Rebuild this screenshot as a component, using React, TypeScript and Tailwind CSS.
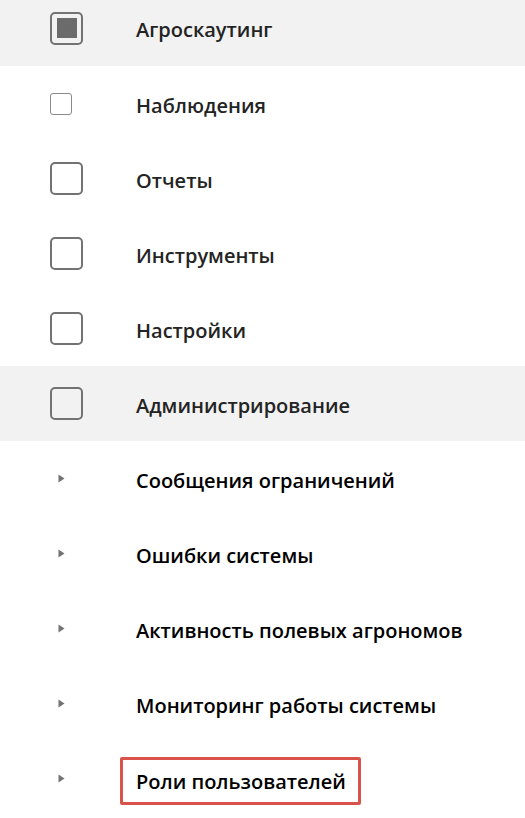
const topItems = [
    { label: 'Агроскаутинг', box: 'filled', shaded: true },
    { label: 'Наблюдения', box: 'small', shaded: false },
    { label: 'Отчеты', box: 'empty', shaded: false },
    { label: 'Инструменты', box: 'empty', shaded: false },
    { label: 'Настройки', box: 'empty', shaded: false },
    { label: 'Администрирование', box: 'empty', shaded: true },
];

const subItems = [
    'Сообщения ограничений',
    'Ошибки системы',
    'Активность полевых агрономов',
    'Мониторинг работы системы',
];

const Box = ({ kind }: { kind: string }) => {
    if (kind === 'small') {
        return <div className="ml-[50px] w-[22px] h-[22px] rounded-[3px] border-[1.5px] border-[#8a8a8a] bg-white" />;
    }
    return (
        <div className="ml-[50px] w-[33px] h-[33px] rounded-[5px] border-2 border-[#737373] flex items-center justify-center">
            {kind === 'filled' && <div className="w-[20px] h-[20px] bg-[#6b6b6b]" />}
        </div>
    );
};

const Arrow = () => (
    <svg width="7" height="9" viewBox="0 0 7 9" className="ml-[58px]">
        <path d="M0.5 0.5 L6.5 4.5 L0.5 8.5 Z" fill="#737373" />
    </svg>
);

export default function App() {
    return (
        <div className="w-[525px] h-[818px] bg-white overflow-hidden" style={{ fontFamily: '"Open Sans", "Noto Sans", sans-serif' }}>
            {topItems.map((item, i) => (
                <div
                    key={item.label}
                    className={`flex items-center ${i === 0 ? 'h-[66px] pb-[10px]' : 'h-[75px]'} ${item.shaded ? 'bg-[#f2f2f2]' : 'bg-white'}`}
                >
                    <div className="w-[136px] flex items-center">
                        <Box kind={item.box} />
                    </div>
                    <span className="text-[20px] font-semibold text-[#242424] pt-[4px]">{item.label}</span>
                </div>
            ))}

            {subItems.map((label) => (
                <div key={label} className="flex items-center h-[75px]">
                    <div className="w-[136px] flex items-center">
                        <Arrow />
                    </div>
                    <span className="text-[20px] font-semibold text-black pt-[4px]">{label}</span>
                </div>
            ))}

            <div className="flex items-center h-[75px]">
                <div className="w-[120px] flex items-center">
                    <Arrow />
                </div>
                <div className="border-[3px] border-[#d9534a] rounded-[2px] h-[48px] w-[241px] pl-[13px] mt-[5px] flex items-center">
                    <span className="text-[20px] font-semibold text-black pt-[1px]">Роли пользователей</span>
                </div>
            </div>
        </div>
    );
}
